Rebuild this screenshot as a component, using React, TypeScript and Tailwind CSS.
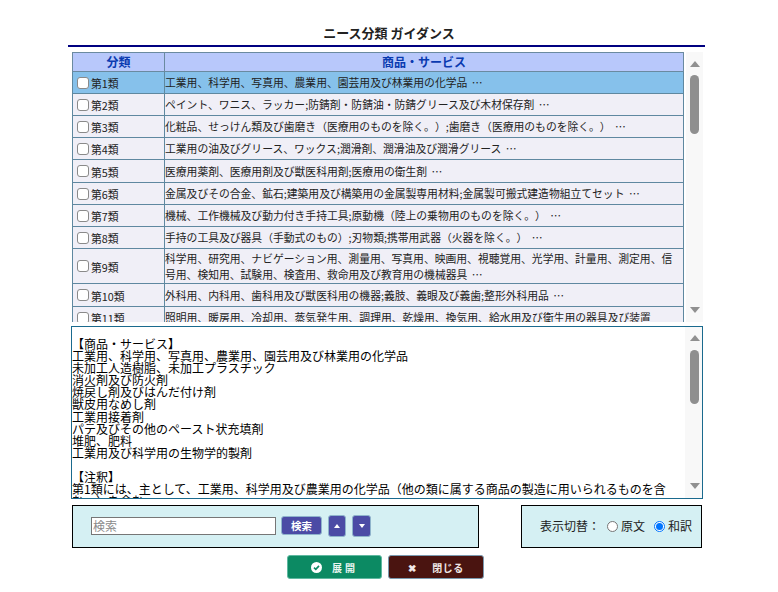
import React from "react";

const font = { fontFamily: '"Noto Sans CJK JP", "Liberation Sans", sans-serif' };

const rows: { n: number; t: React.ReactNode; h: string; active?: boolean }[] = [
  { n: 1, t: "工業用、科学用、写真用、農業用、園芸用及び林業用の化学品 …", h: "h-[22px]", active: true },
  { n: 2, t: "ペイント、ワニス、ラッカー;防錆剤・防錆油・防錆グリース及び木材保存剤 …", h: "h-[22px]" },
  { n: 3, t: "化粧品、せっけん類及び歯磨き（医療用のものを除く。）;歯磨き（医療用のものを除く。） …", h: "h-[22px]" },
  { n: 4, t: "工業用の油及びグリース、ワックス;潤滑剤、潤滑油及び潤滑グリース …", h: "h-[22px]" },
  { n: 5, t: "医療用薬剤、医療用剤及び獣医科用剤;医療用の衛生剤 …", h: "h-[23px]" },
  { n: 6, t: "金属及びその合金、鉱石;建築用及び構築用の金属製専用材料;金属製可搬式建造物組立てセット …", h: "h-[22px]" },
  { n: 7, t: "機械、工作機械及び動力付き手持工具;原動機（陸上の乗物用のものを除く。） …", h: "h-[22px]" },
  { n: 8, t: "手持の工具及び器具（手動式のもの）;刃物類;携帯用武器（火器を除く。） …", h: "h-[22px]" },
  { n: 9, t: "科学用、研究用、ナビゲーション用、測量用、写真用、映画用、視聴覚用、光学用、計量用、測定用、信号用、検知用、試験用、検査用、救命用及び教育用の機械器具 …", h: "h-[35px]" },
  { n: 10, t: "外科用、内科用、歯科用及び獣医科用の機器;義肢、義眼及び義歯;整形外科用品 …", h: "h-[23px]" },
  { n: 11, t: "照明用、暖房用、冷却用、蒸気発生用、調理用、乾燥用、換気用、給水用及び衛生用の器具及び装置", h: "h-[22px]" },
];

const lines = [
  "【商品・サービス】",
  "工業用、科学用、写真用、農業用、園芸用及び林業用の化学品",
  "未加工人造樹脂、未加工プラスチック",
  "消火剤及び防火剤",
  "焼戻し剤及びはんだ付け剤",
  "獣皮用なめし剤",
  "工業用接着剤",
  "パテ及びその他のペースト状充填剤",
  "堆肥、肥料",
  "工業用及び科学用の生物学的製剤",
  "\u00a0",
  "【注釈】",
  "第1類には、主として、工業用、科学用及び農業用の化学品（他の類に属する商品の製造に用いられるものを含",
  "む。）を含む。",
];

function Bar({ thumb, top, extra }: { thumb: string; top: string; extra: string }) {
  return (
    <div className={`flex w-[17px] shrink-0 flex-col items-center bg-[#f8f8f8] ${extra}`}>
      <div className={`h-0 w-0 border-x-[5px] border-b-[6px] border-x-transparent border-b-[#909090] ${top}`} />
      <div className={`w-[9px] rounded-[5px] bg-[#8f8f8f] ${thumb}`} />
      <div className="flex-1" />
      <div className="mb-[9px] h-0 w-0 border-x-[5px] border-t-[6px] border-x-transparent border-t-[#909090]" />
    </div>
  );
}

export default function App() {
  return (
    <div className="h-[592px] w-[778px] bg-white pt-[25px] text-black [text-spacing-trim:space-all]" style={font}>
      <div className="text-center text-[13px] font-bold leading-[16px] text-[#222]">ニース分類 ガイダンス</div>
      <div className="ml-[68px] mt-[4px] h-[2px] w-[637px] bg-[#000080]" />

      <div className="ml-[72px] mt-[5px] flex h-[270px] w-[631px]">
        <div className="h-full w-[612px] overflow-hidden">
          <div className="flex h-[20px] border border-[#6a8aa0] bg-[#b8c8fb] text-[12px] font-bold leading-[17px] text-[#0a3ab0]">
            <div className="w-[92px] border-r border-[#6a8aa0] text-center">分類</div>
            <div className="flex-1 text-center">商品・サービス</div>
          </div>
          {rows.map((r) => (
            <div
              key={r.n}
              className={`flex border-x border-b border-[#5f88a0] text-[10.8px] leading-[14px] text-[#222] [word-spacing:2px] ${r.h} ${r.active ? "bg-[#86c1eb]" : "bg-[#f0eff7]"}`}
            >
              <div className="flex w-[92px] shrink-0 items-center gap-[2px] border-r border-[#5f88a0] pl-[4px]">
                <span className="h-[12px] w-[12px] rounded-[3px] border border-[#8a8a8a] bg-white" />
                <span className="mt-[1px]">第{r.n}類</span>
              </div>
              <div className="flex flex-1 items-center overflow-hidden pb-[1px] pr-[2px]">
                <span className={r.n === 9 ? "block max-w-[510px] leading-[16px]" : ""}>{r.t}</span>
              </div>
            </div>
          ))}
        </div>
        <div className="ml-[2px] flex">
          <Bar thumb="mt-[8px] h-[59px]" top="mt-[9px]" extra="" />
        </div>
      </div>

      <div className="ml-[71px] mt-[4px] flex h-[173px] w-[632px] border border-[#1a6a8e]">
        <div className="flex-1 overflow-hidden pt-[11px] text-[12px] leading-[12.1px] text-black">
          {lines.map((l, i) => (
            <div key={i} className="whitespace-nowrap">{l}</div>
          ))}
        </div>
        <Bar thumb="mt-[9px] h-[54px]" top="mt-[8px]" extra="pl-[2px]" />
      </div>

      <div className="mt-[6px] flex items-start">
        <div className="ml-[72px] flex h-[43px] w-[407px] items-center border border-black bg-[#d5f0f3] pb-[2px] pl-[18px]">
          <input
            placeholder="検索"
            className="h-[18px] w-[185px] border border-[#767676] bg-white px-[1px] text-[12px] leading-[14px] placeholder:text-[#8a8a8a]"
            style={font}
          />
          <button className="ml-[5px] h-[19px] w-[41px] rounded-[3px] border border-[#8fb4cc] bg-[#4b4ba5] text-[10.5px] font-bold leading-[16px] text-white">検索</button>
          <button className="ml-[6px] flex h-[22px] w-[18px] items-center justify-center rounded-[3px] border border-[#8fb4cc] bg-[#4b4ba5]">
            <span className="h-0 w-0 border-x-[3.5px] border-b-[4px] border-x-transparent border-b-white" />
          </button>
          <button className="ml-[6px] flex h-[22px] w-[19px] items-center justify-center rounded-[3px] border border-[#8fb4cc] bg-[#4b4ba5]">
            <span className="h-0 w-0 border-x-[3.5px] border-t-[4px] border-x-transparent border-t-white" />
          </button>
        </div>
        <div className="ml-[42px] flex h-[43px] w-[181px] items-center border border-black bg-[#d5f0f3] pb-[1px] pl-[18px] text-[12px] text-[#222]">
          <span>表示切替</span>
          <span>：</span>
          <span className="ml-[7px] h-[11px] w-[11px] rounded-full border border-[#767676] bg-white" />
          <span className="ml-[3px]">原文</span>
          <span className="ml-[9px] flex h-[11px] w-[11px] items-center justify-center rounded-full border border-[#0075ff] bg-white">
            <span className="h-[7px] w-[7px] rounded-full bg-[#0075ff]" />
          </span>
          <span className="ml-[3px]">和訳</span>
        </div>
      </div>

      <div className="ml-[287px] mt-[7px] flex gap-[6px]">
        <button className="flex h-[24px] w-[95px] items-center justify-center gap-[10px] rounded-[3px] border border-[#5fb8a0] bg-[#0c8a63] text-[10px] font-bold text-[#e8f5f0]">
          <svg width="11" height="11" viewBox="0 0 11 11">
            <circle cx="5.5" cy="5.5" r="5.5" fill="#fff" />
            <path d="M3 5.6 L4.8 7.4 L8 3.9" stroke="#0c8a63" strokeWidth="1.6" fill="none" />
          </svg>
          <span className="tracking-[3px]">展開</span>
        </button>
        <button className="flex h-[24px] w-[96px] items-center justify-center gap-[16px] rounded-[3px] border border-[#7a9ab0] bg-[#4a1410] text-[10px] font-bold text-[#f0e8e8]">
          <span>✖</span>
          <span className="tracking-[0.5px]">閉じる</span>
        </button>
      </div>
    </div>
  );
}
